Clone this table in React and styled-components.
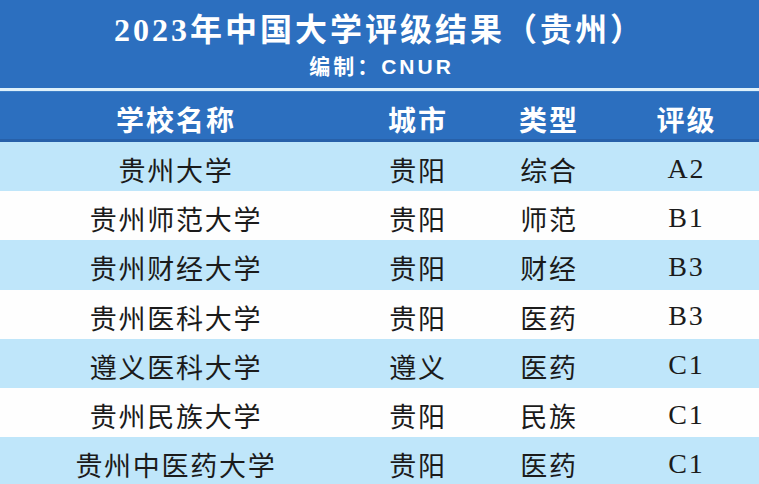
import React from "react";
import styled, { createGlobalStyle } from "styled-components";

const GlobalStyle = createGlobalStyle`
  html, body {
    margin: 0;
    padding: 0;
    background: #ffffff;
  }
`;

const cjk = `"Noto Sans CJK SC", "Noto Sans", sans-serif`;
const serifCjk = `"Liberation Serif", "Noto Sans CJK SC", serif`;

const Page = styled.div`
  width: 759px;
  height: 484px;
  overflow: hidden;
  background: #ffffff;
  color: #1b1b1b;
`;

const TitleBand = styled.header`
  height: 88px;
  background: #2c6fbf;
  display: flex;
  flex-direction: column;
  align-items: center;
  color: #ffffff;
`;

const Title = styled.h1`
  margin: 11px 0 0 0;
  font-family: ${serifCjk};
  font-weight: 700;
  font-size: 32px;
  letter-spacing: 3px;
  line-height: 38px;
`;

const Subtitle = styled.div`
  margin-top: 5px;
  font-family: "Liberation Sans", "Noto Sans CJK SC", sans-serif;
  font-weight: 700;
  font-size: 21px;
  letter-spacing: 3px;
  line-height: 26px;
  padding-left: 4px;
`;

const Divider = styled.div`
  height: 3px;
  background: #dff1fb;
  border-bottom: 1px solid #3f7fc6;
`;

const Row = styled.div`
  display: grid;
  grid-template-columns: 350px 134px 128px 147px;
  align-items: center;
  height: ${(p) => p.$h}px;
  box-sizing: border-box;
  background: ${(p) => p.$bg};
  border-bottom: ${(p) => (p.$edge ? `3px solid ${p.$edge}` : "none")};
`;

const HeadCell = styled.div`
  text-align: center;
  font-family: ${cjk};
  font-weight: 700;
  font-size: 28px;
  letter-spacing: 2px;
  color: #ffffff;
  padding-top: 6px;
  padding-left: 2px;
`;

const Cell = styled.div`
  text-align: center;
  font-family: ${(p) => (p.$latin ? serifCjk : cjk)};
  font-size: ${(p) => (p.$latin ? 28 : 27)}px;
  letter-spacing: ${(p) => (p.$latin ? 2 : 1.75)}px;
  padding-top: ${(p) => (p.$latin ? 4 : 6)}px;
  padding-left: 2px;
  color: #1b1b1b;
`;

const schools = [
  ["贵州大学", "贵阳", "综合", "A2"],
  ["贵州师范大学", "贵阳", "师范", "B1"],
  ["贵州财经大学", "贵阳", "财经", "B3"],
  ["贵州医科大学", "贵阳", "医药", "B3"],
  ["遵义医科大学", "遵义", "医药", "C1"],
  ["贵州民族大学", "贵阳", "民族", "C1"],
  ["贵州中医药大学", "贵阳", "医药", "C1"],
];

export default function App() {
  return (
    <Page>
      <GlobalStyle />
      <TitleBand>
        <Title>2023年中国大学评级结果（贵州）</Title>
        <Subtitle>编制：CNUR</Subtitle>
      </TitleBand>
      <Divider />
      <Row $h={50} $bg="#2c6fbf" $edge="#2760a9">
        <HeadCell>学校名称</HeadCell>
        <HeadCell>城市</HeadCell>
        <HeadCell>类型</HeadCell>
        <HeadCell>评级</HeadCell>
      </Row>
      {schools.map((s, i) => (
        <Row key={s[0]} $h={49.2} $bg={i % 2 === 0 ? "#bfe6fa" : "#fefefe"}>
          <Cell>{s[0]}</Cell>
          <Cell>{s[1]}</Cell>
          <Cell>{s[2]}</Cell>
          <Cell $latin>{s[3]}</Cell>
        </Row>
      ))}
    </Page>
  );
}
